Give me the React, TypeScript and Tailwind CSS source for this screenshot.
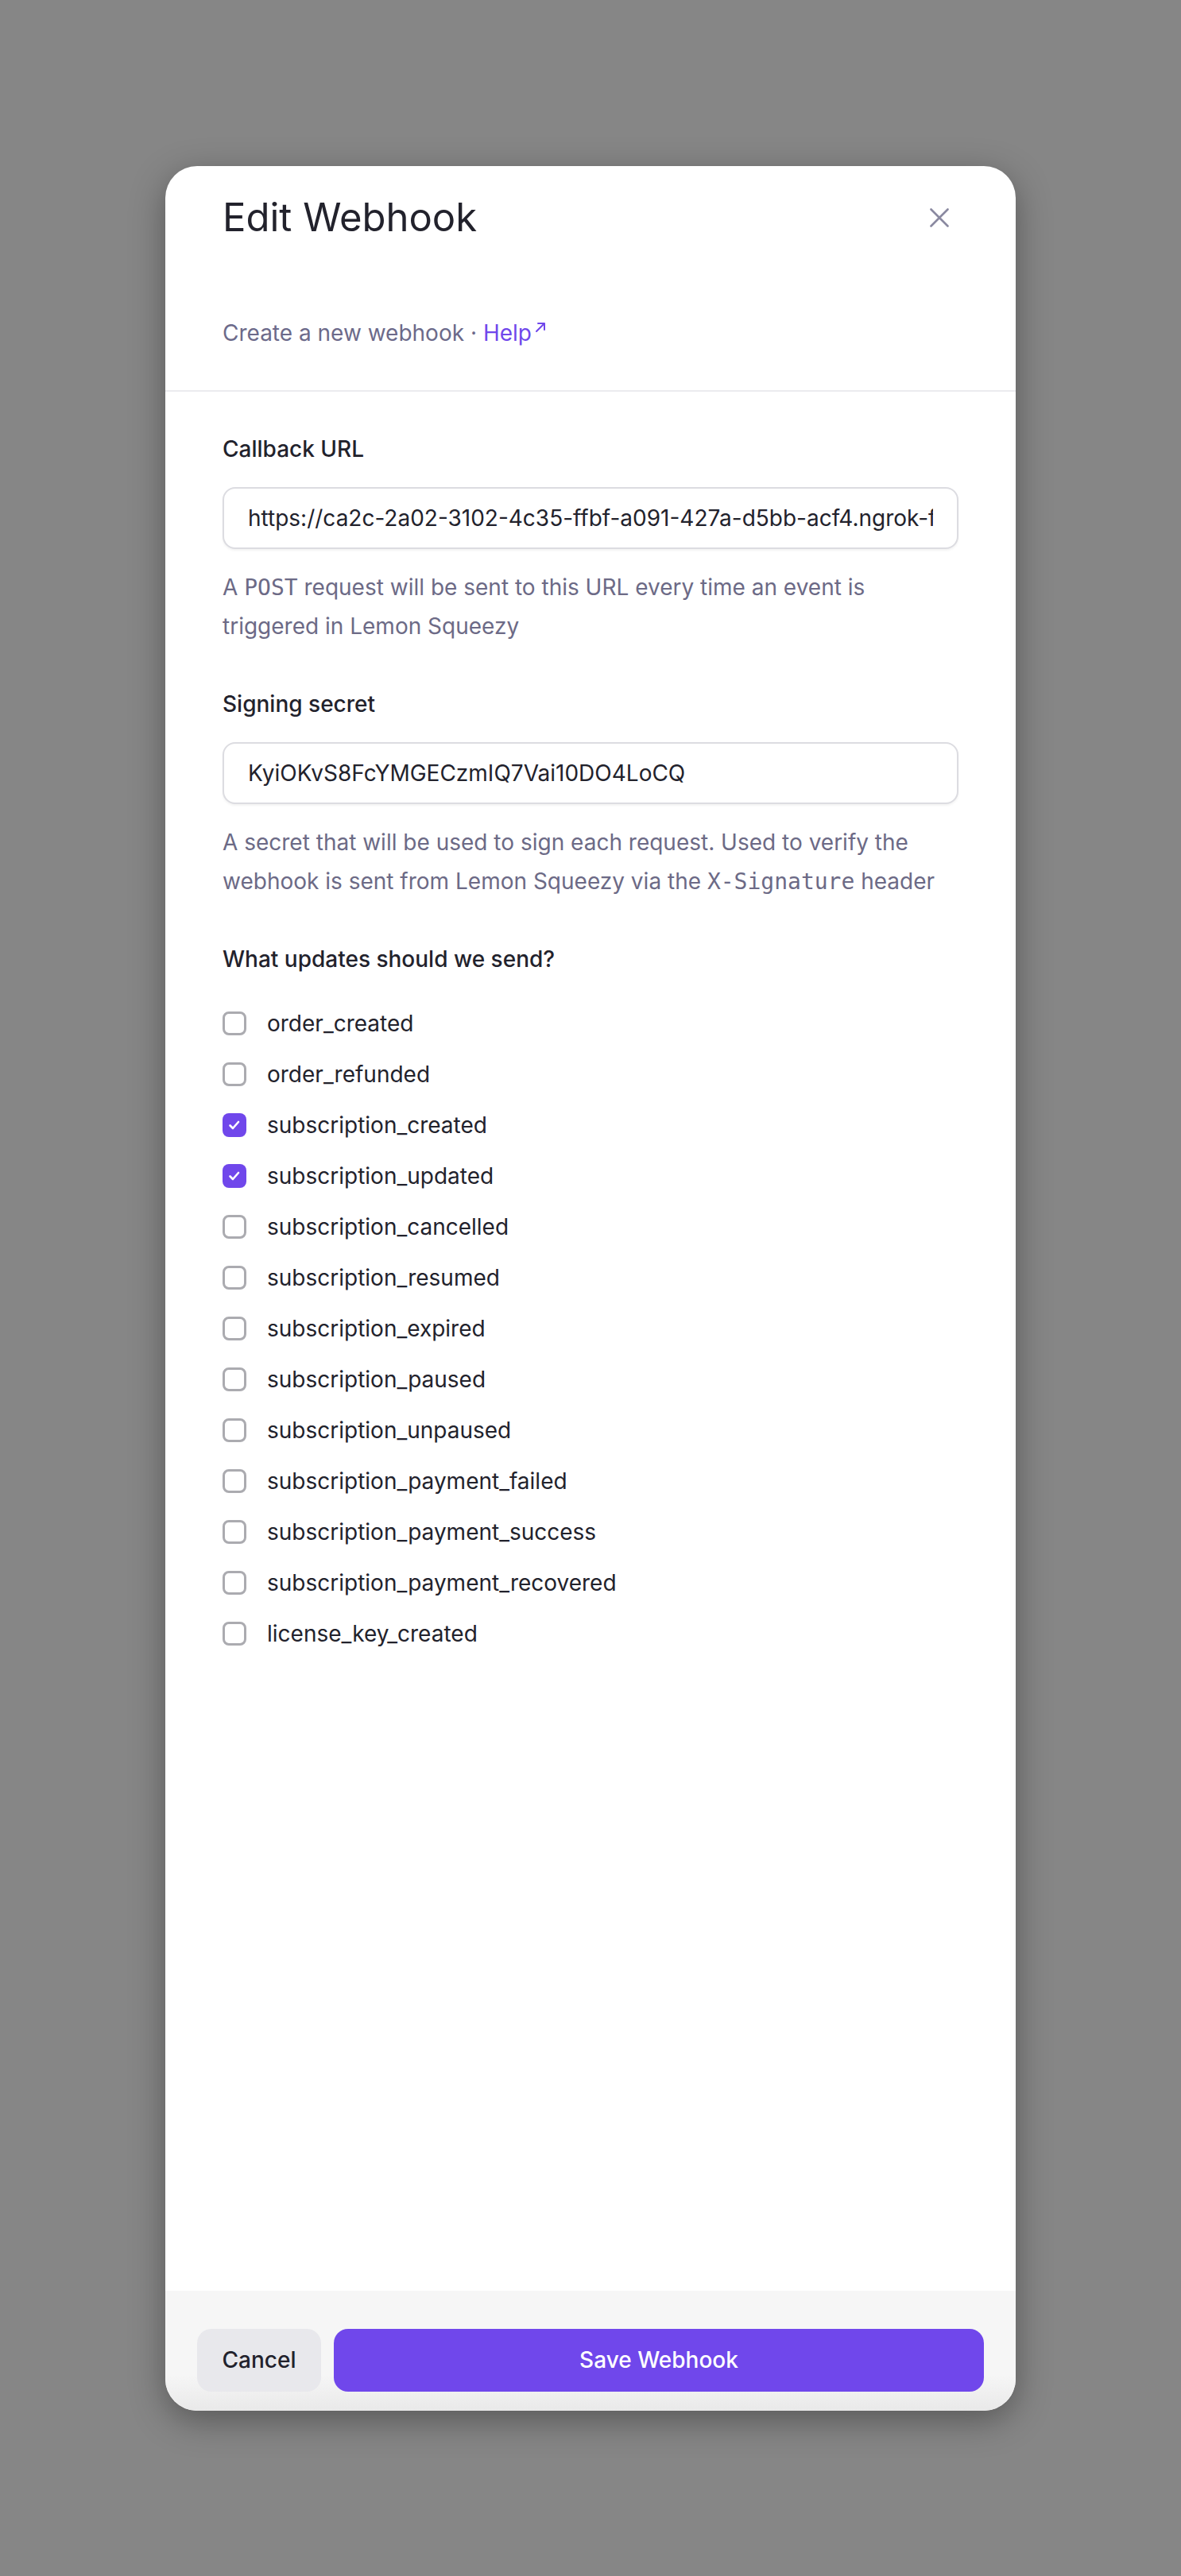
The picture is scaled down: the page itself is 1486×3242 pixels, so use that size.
import React from "react";

const events: { name: string; checked: boolean }[] = [
  { name: "order_created", checked: false },
  { name: "order_refunded", checked: false },
  { name: "subscription_created", checked: true },
  { name: "subscription_updated", checked: true },
  { name: "subscription_cancelled", checked: false },
  { name: "subscription_resumed", checked: false },
  { name: "subscription_expired", checked: false },
  { name: "subscription_paused", checked: false },
  { name: "subscription_unpaused", checked: false },
  { name: "subscription_payment_failed", checked: false },
  { name: "subscription_payment_success", checked: false },
  { name: "subscription_payment_recovered", checked: false },
  { name: "license_key_created", checked: false },
];

function Checkbox({ checked }: { checked: boolean }) {
  if (checked) {
    return (
      <div className="flex size-[30px] shrink-0 items-center justify-center rounded-[8px] bg-[#7047eb]">
        <svg width="20" height="20" viewBox="0 0 20 20" fill="none">
          <path d="M4.5 10.5L8 14L15 6" stroke="white" strokeWidth="2.6" strokeLinecap="round" strokeLinejoin="round" />
        </svg>
      </div>
    );
  }
  return <div className="size-[30px] shrink-0 rounded-[8px] border-[3px] border-[#ababb0] bg-white" />;
}

export default function App() {
  const mono = { fontFamily: '"DejaVu Sans Mono", "Liberation Mono", monospace' };
  return (
    <div
      className="flex h-[3242px] w-full items-center justify-center bg-[#868686]"
      style={{ fontFamily: 'Inter, "Noto Sans", sans-serif' }}
    >
      <div className="flex h-[2825px] w-[1070px] flex-col overflow-hidden rounded-[40px] bg-white shadow-[0_12px_44px_rgba(0,0,0,0.35)]">
        {/* Header */}
        <div className="px-[72px] pt-[37px] pb-[48px]">
          <div className="flex h-[56px] items-center justify-between">
            <h1 className="text-[49px] leading-[56px] font-normal text-[#22222c]">Edit Webhook</h1>
            <button className="flex size-[48px] items-center justify-center">
              <svg width="24" height="24" viewBox="0 0 24 24" fill="none">
                <path d="M1.5 1.5L22.5 22.5M22.5 1.5L1.5 22.5" stroke="#8a89a0" strokeWidth="2.6" strokeLinecap="round" />
              </svg>
            </button>
          </div>
          <p className="mt-[93px] text-[28px] leading-[48px] text-[#6c6a8a]">
            Create a new webhook ·{" "}
            <span className="text-[#7047eb]">
              Help
              <svg className="ml-[4px] inline-block align-[10px]" width="14" height="14" viewBox="0 0 14 14" fill="none">
                <path d="M2 12L12 2M4 2H12V10" stroke="#7047eb" strokeWidth="2" strokeLinecap="round" strokeLinejoin="round" />
              </svg>
            </span>
          </p>
        </div>
        <div className="h-[2px] bg-[#ebebef]" />

        {/* Body */}
        <div className="flex-1 px-[72px] pt-[48px]">
          <label className="block text-[28px] leading-[48px] font-medium text-[#22222c]">Callback URL</label>
          <input
            readOnly
            value="https://ca2c-2a02-3102-4c35-ffbf-a091-427a-d5bb-acf4.ngrok-free.app/webhooks/lemon-squeezy"
            className="mt-[24px] block h-[78px] w-full rounded-[16px] border-2 border-[#dcdce1] bg-white px-[30px] text-[28px] text-[#22222c] shadow-[0_2px_3px_rgba(0,0,0,0.05)] outline-none"
          />
          <p className="mt-[24px] text-[28px] leading-[49px] text-[#6c6a86]">
            A <span style={mono} className="text-[28px]">POST</span> request will be sent to this URL every time an event is
            <br />
            triggered in Lemon Squeezy
          </p>

          <label className="mt-[49px] block text-[28px] leading-[48px] font-medium text-[#22222c]">Signing secret</label>
          <input
            readOnly
            value="KyiOKvS8FcYMGECzmIQ7Vai10DO4LoCQ"
            className="mt-[24px] block h-[78px] w-full rounded-[16px] border-2 border-[#dcdce1] bg-white px-[30px] text-[28px] text-[#22222c] shadow-[0_2px_3px_rgba(0,0,0,0.05)] outline-none"
          />
          <p className="mt-[24px] text-[28px] leading-[49px] text-[#6c6a86]">
            A secret that will be used to sign each request. Used to verify the
            <br />
            webhook is sent from Lemon Squeezy via the <span style={mono} className="text-[28px]">X-Signature</span> header
          </p>

          <p className="mt-[49px] text-[28px] leading-[48px] font-medium text-[#22222c]">What updates should we send?</p>
          <div className="mt-[25px] flex flex-col">
            {events.map((e) => (
              <div key={e.name} className="flex h-[64px] items-center gap-[26px]">
                <Checkbox checked={e.checked} />
                <span className="text-[28px] leading-[40px] text-[#22222c]">{e.name}</span>
              </div>
            ))}
          </div>
        </div>

        {/* Footer */}
        <div className="flex gap-[16px] bg-[linear-gradient(to_bottom,#f6f6f6_70%,#e9e9e9)] px-[40px] pt-[48px] pb-[24px]">
          <button className="h-[79px] w-[156px] rounded-[18px] bg-[#e8e8ec] text-[28px] font-medium text-[#22222c]">
            Cancel
          </button>
          <button className="h-[79px] flex-1 rounded-[18px] bg-[#7047eb] text-[28px] font-medium text-white">
            Save Webhook
          </button>
        </div>
      </div>
    </div>
  );
}
